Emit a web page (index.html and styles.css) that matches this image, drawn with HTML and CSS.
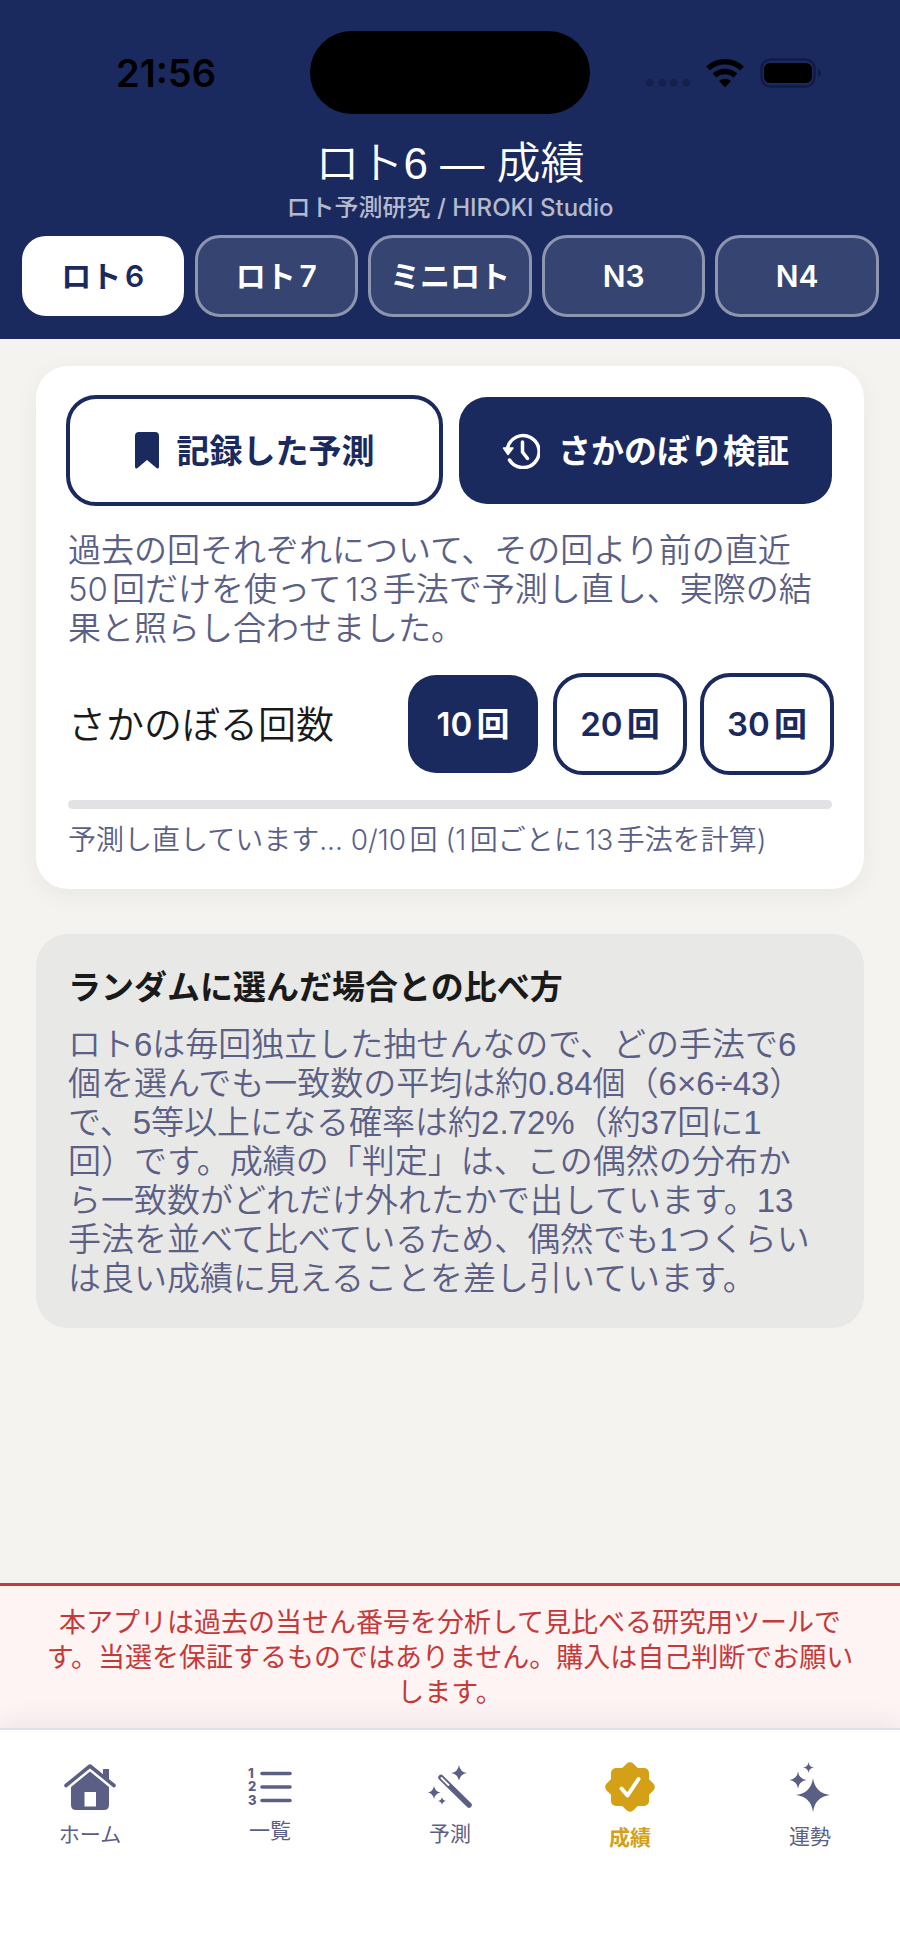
FILE: index.html
```html
<!DOCTYPE html>
<html lang="ja">
<head>
  <meta charset="UTF-8">
  <meta name="viewport" content="width=device-width, initial-scale=1.0">
  <title>ロト6 — 成績</title>
  <link rel="stylesheet" href="styles.css">
</head>
<body>
  <header class="header">
    <div class="status">
      <span class="time">21:56</span>
      <div class="island"></div>
      <svg class="status-icons" width="176" height="30" viewBox="0 0 176 30">
        <g fill="#15204d">
          <circle cx="4" cy="25" r="4"/>
          <circle cx="16" cy="25" r="4"/>
          <circle cx="28" cy="25" r="4"/>
          <circle cx="40" cy="25" r="4"/>
        </g>
        <g fill="none" stroke="#000" stroke-width="5.5">
          <path d="M62 10.5a25 25 0 0 1 34 0"/>
          <path d="M68.500 17.500a15.500 15.500 0 0 1 21 0"/>
        </g>
        <path d="M79 29.500l-6-6.500a9 9 0 0 1 12 0z"/>
        <rect x="115.500" y="1.500" width="53" height="27" rx="9" fill="none" stroke="#121b43" stroke-width="2.500"/>
        <rect x="118" y="5" width="48" height="20" rx="6"/>
        <path d="M172 11q3 1 3 4t-3 4z" fill="#121b43"/>
      </svg>
    </div>
    <h1>ロト6 — 成績</h1>
    <p class="sub">ロト予測研究 / HIROKI Studio</p>
    <div class="games">
      <button type="button" class="active">ロト6</button>
      <button type="button">ロト7</button>
      <button type="button">ミニロト</button>
      <button type="button">N3</button>
      <button type="button">N4</button>
    </div>
  </header>

  <main>
    <section class="card">
      <div class="modes">
        <button type="button" class="btn">
          <svg width="24" height="37" viewBox="0 0 24 37" fill="currentColor">
            <path d="M4 0h16q4 0 4 4v30.500q0 3-2.500 1.500L12 28 2.500 36Q0 37.500 0 34.500V4q0-4 4-4z"/>
          </svg>
          記録した予測
        </button>
        <button type="button" class="btn active">
          <svg width="38" height="36" viewBox="0 0 38 36" fill="none" stroke="currentColor" stroke-width="3.500" stroke-linecap="round" stroke-linejoin="round">
            <path d="M5.500 15A16 16 0 1 1 7.500 27"/>
            <path d="M1.500 15h9.500l-5 6.500z" fill="currentColor" stroke-width="1.500"/>
            <path d="M20.500 9v10l5 6.500"/>
          </svg>
          さかのぼり検証
        </button>
      </div>
      <p class="text">過去の回それぞれについて、その回より前の直近<br>50回だけを使って13手法で予測し直し、実際の結<br>果と照らし合わせました。</p>
      <div class="range">
        <span class="label" id="range-label">さかのぼる回数</span>
        <div class="counts" role="group" aria-labelledby="range-label">
          <button type="button" class="btn active">10回</button>
          <button type="button" class="btn">20回</button>
          <button type="button" class="btn">30回</button>
        </div>
      </div>
      <progress value="0" max="10" aria-labelledby="progress-label"></progress>
      <p class="small" id="progress-label">予測し直しています... 0/10回 (1回ごとに13手法を計算)</p>
    </section>

    <section class="card note">
      <h2>ランダムに選んだ場合との比べ方</h2>
      <p class="text">ロト6は毎回独立した抽せんなので、どの手法で6<br>個を選んでも一致数の平均は約0.84個（6×6÷43）<br>で、5等以上になる確率は約2.72%（約37回に1<br>回）です。成績の「判定」は、この偶然の分布か<br>ら一致数がどれだけ外れたかで出しています。13<br>手法を並べて比べているため、偶然でも1つくらい<br>は良い成績に見えることを差し引いています。</p>
    </section>
  </main>

  <p class="notice">本アプリは過去の当せん番号を分析して見比べる研究用ツールです。当選を保証するものではありません。購入は自己判断でお願いします。</p>

  <nav class="tabbar">
    <a href="#home">
      <svg width="52" height="46" viewBox="0 0 52 46">
        <path d="M2 21.500L26 2l24 19.500" fill="none" stroke="currentColor" stroke-width="3.600" stroke-linecap="round" stroke-linejoin="round"/>
        <path d="M39 5h6v13l-6-5z" fill="currentColor"/>
        <path fill="currentColor" fill-rule="evenodd" d="M26 7.500l19 15.500v18q0 5-5 5H12q-5 0-5-5V23zM20.500 28v14.500h11.500V28z"/>
      </svg>
      ホーム
    </a>
    <a href="#list">
      <svg width="46" height="38" viewBox="0 0 46 38">
        <path d="M15 5.500h28M15 19h28M15 32.500h28" stroke="currentColor" stroke-width="3.600" stroke-linecap="round"/>
        <g class="nums" fill="currentColor">
          <text x="1" y="10">1</text>
          <text x="1" y="23">2</text>
          <text x="1" y="37">3</text>
        </g>
      </svg>
      一覧
    </a>
    <a href="#predict">
      <svg width="44" height="44" viewBox="0 0 44 44" fill="currentColor">
        <path d="M13 12.500l28 27.500" stroke="currentColor" stroke-width="5.500" stroke-linecap="round"/>
        <path d="M13.500 13l7 7" stroke="#fff" stroke-width="1.800" stroke-linecap="round"/>
        <path d="M31 0q1 7 8 8-7 1-8 8-1-7-8-8 7-1 8-8z"/>
        <path d="M6 21q1 5.500 6.500 6.500Q7 28.500 6 34q-1-5.500-6-6.500 5-1 6-6.500z"/>
        <path d="M14 32q.5 3.500 4 4-3.500.5-4 4-.5-3.500-4-4 3.500-.5 4-4z"/>
      </svg>
      予測
    </a>
    <a href="#results" class="active">
      <svg width="52" height="52" viewBox="-26 -26 52 52">
        <g fill="currentColor">
          <rect x="-19" y="-19" width="38" height="38" rx="5"/>
          <rect x="-19" y="-19" width="38" height="38" rx="5" transform="rotate(45)"/>
        </g>
        <path d="M-8.500 1.500l6 7L8.500-8" fill="none" stroke="#fff" stroke-width="4" stroke-linecap="round" stroke-linejoin="round"/>
      </svg>
      成績
    </a>
    <a href="#fortune">
      <svg width="42" height="50" viewBox="0 0 42 50" fill="currentColor">
        <path d="M24 16q2 15 17 17-15 2-17 17-2-15-17-17 15-2 17-17z"/>
        <path d="M9 9.500q1 7.500 8.500 8.500-7.500 1-8.500 8.500Q8 19 .5 18 8 17 9 9.500z"/>
        <path d="M19.500 0q.5 5 5.500 5.500-5 .5-5.500 5.500-.5-5-5.500-5.500 5-.5 5.500-5.500z"/>
      </svg>
      運勢
    </a>
  </nav>
</body>
</html>
```
FILE: styles.css
```css
* {
  box-sizing: border-box;
}

body {
  margin: 0;
  min-height: 100vh;
  display: flex;
  flex-direction: column;
  background: #f4f3ef;
  color: #1a1a1a;
  font-family: Inter, "Noto Sans CJK JP", sans-serif;
  text-autospace: normal;
}

h1,
h2,
p {
  margin: 0;
}

button {
  margin: 0;
  padding: 0;
  border: none;
  font: inherit;
  font-weight: 600;
  white-space: nowrap;
}

/* 上部 */
.header {
  padding: 31px 22px 23px;
  background: #1b2a5e;
  color: #fff;
  text-align: center;
}

.status {
  display: grid;
  grid-template-columns: 1fr 280px 1fr;
  align-items: center;
  justify-items: center;
  color: #000;
}

.time {
  font-size: 38px;
  font-weight: 600;
}

.island {
  width: 280px;
  height: 83px;
  border-radius: 42px;
  background: #000;
}

.header h1 {
  margin-top: 24px;
  font-family: "Liberation Sans", "Noto Sans CJK JP", sans-serif;
  font-size: 44px;
  font-weight: 350;
  line-height: 52px;
  text-autospace: no-autospace;
}

.sub {
  margin-top: 4px;
  font-size: 24px;
  font-weight: 500;
  line-height: 28px;
  color: #b4b9cc;
}

.games {
  display: flex;
  gap: 12px;
  margin-top: 14px;
}

.games button {
  flex: 1;
  height: 80px;
  border-radius: 24px;
  outline: 3px solid #8d95af;
  outline-offset: -2px;
  background: #364472;
  color: #fff;
  font-size: 30px;
  line-height: 36px;
}

.games .active {
  outline: none;
  background: #fff;
  color: #1b2a5e;
}

/* カード */
main {
  flex: 1;
  padding: 27px 36px;
}

.card {
  padding: 31px 32px 30px;
  border-radius: 32px;
  background: #fff;
  box-shadow: 0 6px 24px rgba(0, 0, 0, 0.05);
}

.modes {
  display: flex;
  gap: 18px;
}

.btn {
  display: flex;
  align-items: center;
  justify-content: center;
  border-radius: 28px;
  outline: 4px solid #1b2a5e;
  outline-offset: -2px;
  background: #fff;
  color: #1b2a5e;
  font-size: 33px;
  line-height: 38px;
}

.btn.active {
  outline: none;
  background: #1b2a5e;
  color: #fff;
}

.modes .btn {
  flex: 1;
  gap: 18px;
  height: 107px;
}

.text {
  margin-top: 27px;
  font-size: 33px;
  font-weight: 350;
  line-height: 39px;
  color: #5c5f85;
  white-space: nowrap;
}

.range {
  display: flex;
  align-items: center;
  justify-content: space-between;
  margin-top: 27px;
}

.label {
  font-size: 38px;
  font-weight: 350;
  line-height: 38px;
}

.counts {
  display: flex;
  gap: 17px;
}

.counts .btn {
  width: 130px;
  height: 98px;
}

progress {
  display: block;
  width: 100%;
  height: 9px;
  margin-top: 27px;
  border: none;
  border-radius: 5px;
  overflow: hidden;
  appearance: none;
  background: #e2e2e4;
}

progress::-webkit-progress-bar {
  background: #e2e2e4;
}

progress::-webkit-progress-value {
  background: #1b2a5e;
}

.small {
  margin-top: 12px;
  font-size: 28px;
  font-weight: 350;
  line-height: 38px;
  color: #5c5f85;
}

.note {
  margin-top: 45px;
  padding-top: 34px;
  background: #e8e8e6;
  box-shadow: none;
}

.note h2 {
  font-size: 33px;
  font-weight: 700;
  line-height: 39px;
}

.note .text {
  margin-top: 18px;
  font-family: "Liberation Sans", "Noto Sans CJK JP", sans-serif;
  text-autospace: no-autospace;
}

/* 注意書き */
.notice {
  padding: 19px 40px 18px;
  border-top: 3px solid #c43a3a;
  background: #fff4f4;
  color: #c43a3a;
  font-size: 27px;
  line-height: 35px;
  text-align: center;
}

/* タブバー */
.tabbar {
  display: flex;
  height: 229px;
  padding-bottom: 74px;
  border-top: 2px solid #dfe1ea;
  background: #fff;
  box-shadow: 0 -6px 24px rgba(27, 42, 94, 0.08);
}

.tabbar a {
  flex: 1;
  display: flex;
  flex-direction: column;
  align-items: center;
  justify-content: center;
  gap: 11px;
  color: #5c5f85;
  font-size: 21px;
  line-height: 28px;
  text-decoration: none;
}

.tabbar .active {
  color: #d4a017;
  font-weight: 600;
}

.tabbar svg {
  overflow: visible;
}

.nums {
  font-size: 13px;
  font-weight: 800;
}
```
